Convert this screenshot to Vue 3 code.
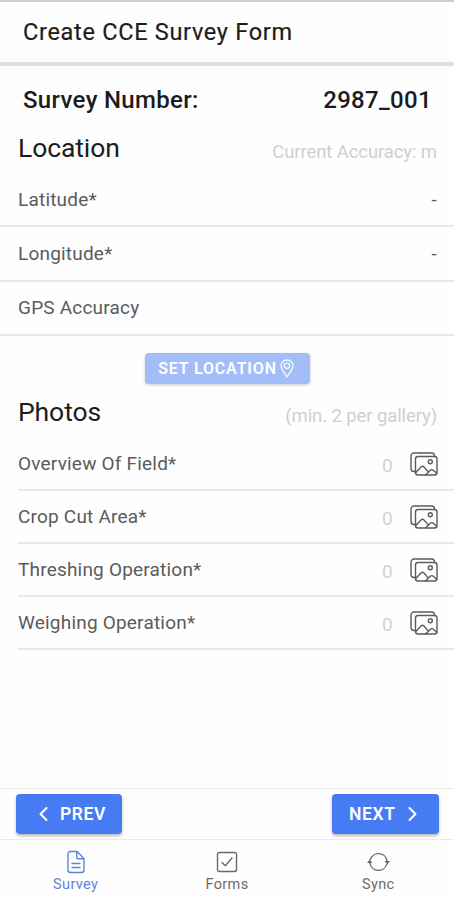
<script setup>
const coordinates = [
  { label: 'Latitude*', value: '-' },
  { label: 'Longitude*', value: '-' },
  { label: 'GPS Accuracy', value: '' },
]
const galleries = [
  { label: 'Overview Of Field*', count: 0 },
  { label: 'Crop Cut Area*', count: 0 },
  { label: 'Threshing Operation*', count: 0 },
  { label: 'Weighing Operation*', count: 0 },
]
</script>

<template>
  <div class="screen">
    <header class="header"><h1>Create CCE Survey Form</h1></header>

    <main class="content">
      <div class="number"><span>Survey Number:</span><span>2987_001</span></div>

      <div class="heading location-heading">
        <h2>Location</h2>
        <span class="hint">Current Accuracy: m</span>
      </div>
      <div v-for="row in coordinates" :key="row.label" class="row">
        <span>{{ row.label }}</span><span>{{ row.value }}</span>
      </div>

      <div class="set-wrap">
        <button class="set">
          <span>SET LOCATION</span>
          <svg class="pin" viewBox="0 0 14 19">
            <path d="M7 18C5.500 15.200 1 10.500 1 6.800a6 6 0 0 1 12 0C13 10.500 8.500 15.200 7 18z" />
            <circle cx="7" cy="6.700" r="2.700" />
          </svg>
        </button>
      </div>

      <div class="heading photos-heading">
        <h2>Photos</h2>
        <span class="hint">(min. 2 per gallery)</span>
      </div>
      <div class="galleries">
        <div v-for="item in galleries" :key="item.label" class="gallery">
          <span class="gallery-label">{{ item.label }}</span>
          <span class="count">{{ item.count }}</span>
          <svg class="images" viewBox="0 0 28 24">
            <path d="M24.500 4.500V4a3 3 0 0 0-3-3H4a3 3 0 0 0-3 3v12.500a3 3 0 0 0 3 3h1.500" />
            <rect x="5.500" y="4.500" width="21.500" height="18.500" rx="2.500" />
            <circle cx="20.300" cy="9.800" r="2" />
            <path d="M5.800 20.500l5.200-5.500q1.500-1.300 3 0l4 4.600M15.500 23l4.800-4.800q1.500-1.200 3 0l3.600 3.200" />
          </svg>
        </div>
      </div>
    </main>

    <div class="actions">
      <button class="action prev">
        <svg class="chevron" viewBox="0 0 9 14"><path d="M7.500 1L1.500 7l6 6" /></svg>
        <span>PREV</span>
      </button>
      <button class="action next">
        <span>NEXT</span>
        <svg class="chevron" viewBox="0 0 9 14"><path d="M1.500 1l6 6-6 6" /></svg>
      </button>
    </div>

    <nav class="tabs">
      <a class="tab active">
        <svg viewBox="0 0 24 24">
          <path d="M4 4a2.500 2.500 0 0 1 2.500-2.500h6.700L20 8.700V20a2.500 2.500 0 0 1-2.500 2.500h-11A2.500 2.500 0 0 1 4 20zM12.700 1.500V7A1.800 1.800 0 0 0 14.500 8.800H20M8 13.500h8M8 17.500h8" />
        </svg>
        <span>Survey</span>
      </a>
      <a class="tab">
        <svg viewBox="0 0 24 24">
          <rect x="2.500" y="2.500" width="19" height="19" rx="2" />
          <path d="M7 12.500l3.300 3.300L17 8" />
        </svg>
        <span>Forms</span>
      </a>
      <a class="tab">
        <svg class="sync" viewBox="0 0 24 24">
          <path d="M3.500 9.500A9 9 0 0 1 21 11M20.500 14.500A9 9 0 0 1 3 13" />
          <path class="solid" d="M18.200 11h5.800l-2.900 3.600zM0 13h5.800L2.900 9.400z" />
        </svg>
        <span>Sync</span>
      </a>
    </nav>
  </div>
</template>

<style>
body { margin: 0; background: #fefefe; }
</style>

<style scoped>
.screen {
  box-sizing: border-box;
  width: 454px;
  height: 900px;
  display: flex;
  flex-direction: column;
  overflow: hidden;
  background: #fefefe;
  color: #1c1c1c;
  font-family: Roboto, "Liberation Sans", sans-serif;
}
h1, h2 { margin: 0; font-weight: 400; }
span { white-space: nowrap; }
button { border: 0; font-family: inherit; color: #fff; }
svg { fill: none; stroke: currentColor; stroke-linecap: round; stroke-linejoin: round; overflow: visible; }
.header {
  box-sizing: border-box;
  height: 66px;
  padding: 0 23px;
  display: flex;
  align-items: center;
  border-top: 2px solid #cdcdcd;
  border-bottom: 4px solid #dedede;
}
h1 { font-size: 23.500px; letter-spacing: .7px; -webkit-text-stroke: .2px; }
.content { flex: 1; }
.number {
  box-sizing: border-box;
  height: 64px;
  padding: 4px 22px 0 23px;
  display: flex;
  justify-content: space-between;
  align-items: center;
  font-size: 24px;
  font-weight: 500;
  letter-spacing: .32px;
}
.heading {
  box-sizing: border-box;
  display: flex;
  justify-content: space-between;
  align-items: baseline;
  padding: 0 17px 0 18px;
}
.location-heading { height: 43px; }
h2 { font-size: 26.500px; line-height: 36px; letter-spacing: -.1px; }
.hint { color: #cfcfcf; font-size: 18.500px; letter-spacing: -.1px; position: relative; top: 1px; }
.row {
  box-sizing: border-box;
  height: 54.300px;
  padding: 0 17px 0 18px;
  display: flex;
  align-items: center;
  justify-content: space-between;
  border-bottom: 2px solid #e9e9e9;
  color: #5b5b5b;
  font-size: 19px;
  letter-spacing: .2px;
}
.set-wrap { box-sizing: border-box; height: 58px; display: flex; justify-content: center; align-items: flex-start; padding-top: 17px; }
.set {
  width: 165px;
  height: 31px;
  padding: 0 2px 0 0;
  display: flex;
  align-items: center;
  justify-content: center;
  gap: 3px;
  border-radius: 4px;
  background: #a3bdf9;
  box-shadow: 0 1px 3px #0003;
  font-size: 16px;
  font-weight: 600;
  letter-spacing: .85px;
}
.pin { width: 14px; height: 19px; stroke-width: 1.200; }
.photos-heading { height: 44px; }
.galleries { padding-left: 18px; }
.gallery {
  box-sizing: border-box;
  height: 53px;
  padding: 2px 16px 0 0;
  display: flex;
  align-items: center;
  border-bottom: 2px solid #e9e9e9;
  color: #5b5b5b;
  font-size: 19px;
  letter-spacing: .2px;
}
.gallery-label { flex: 1; padding-bottom: 2px; }
.count { color: #d2d2d2; padding-top: 2px; margin-right: 17px; }
.images { width: 28px; height: 24px; stroke-width: 1.400; }
.actions {
  box-sizing: border-box;
  height: 51px;
  padding: 5px 15px 0 16px;
  display: flex;
  justify-content: space-between;
  align-items: flex-start;
  border-top: 1px solid #eaeaea;
}
.action {
  box-sizing: border-box;
  height: 40px;
  padding: 0;
  display: flex;
  align-items: center;
  border-radius: 4px;
  background: #467bf4;
  box-shadow: 0 2px 3px #0004;
  font-size: 17.500px;
  font-weight: 600;
  letter-spacing: .6px;
}
.prev { width: 106px; padding-left: 23px; gap: 12px; }
.next { width: 107px; padding-left: 17px; gap: 12px; }
.chevron { width: 9px; height: 14px; stroke-width: 2; }
.tabs {
  box-sizing: border-box;
  height: 61px;
  padding-top: 10px;
  display: grid;
  grid-template-columns: repeat(3, 1fr);
  border-top: 1px solid #eaeaea;
}
.tab { display: flex; flex-direction: column; align-items: center; color: #6a6a6a; font-size: 14.500px; line-height: 18px; letter-spacing: .35px; }
.tab svg { width: 24px; height: 24px; margin-bottom: 2px; stroke-width: 1.400; }
.tab.active { color: #5e86d6; }
.tab .sync { width: 23px; }
.tab .solid { fill: currentColor; stroke: none; }
</style>
